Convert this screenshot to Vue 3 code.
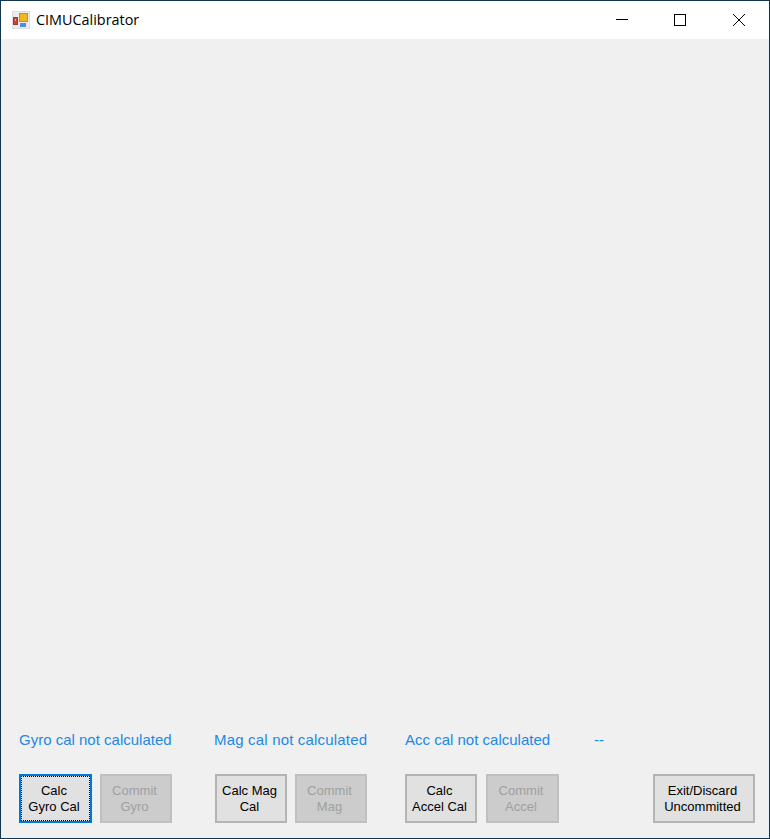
<script setup>
const labels = [
  { text: 'Gyro cal not calculated', cls: 'l1' },
  { text: 'Mag cal not calculated', cls: 'l2' },
  { text: 'Acc cal not calculated', cls: 'l3' },
  { text: '--', cls: 'l4' }
]
const groups = [
  { cls: 'g1', main: ['Calc', 'Gyro Cal'], commit: ['Commit', 'Gyro'], focus: true },
  { cls: 'g2', main: ['Calc Mag', 'Cal'], commit: ['Commit', 'Mag'] },
  { cls: 'g3', main: ['Calc', 'Accel Cal'], commit: ['Commit', 'Accel'] }
]
</script>

<template>
  <div class="window">
    <header class="titlebar">
      <div class="app">
        <svg class="appicon" width="18" height="18" viewBox="0 0 18 18">
          <rect x="0" y="0" width="18" height="18" fill="#dcdcdc" />
          <rect x="1" y="1" width="16" height="16" fill="#ececec" />
          <rect x="7.5" y="2.5" width="8" height="8" fill="#f0b820" stroke="#c0922a" />
          <rect x="1.5" y="6.5" width="4" height="7" fill="#c8443c" stroke="#963c36" />
          <rect x="3" y="8" width="1" height="2" fill="#eaa8a0" />
          <rect x="8" y="12" width="6" height="4" fill="#4a8ee8" />
        </svg>
        <span class="title">CIMUCalibrator</span>
      </div>
      <div class="controls">
        <div class="ctl">
          <svg width="12" height="12" viewBox="0 0 12 12"><path d="M0 5.5H12" stroke="#000" fill="none" /></svg>
        </div>
        <div class="ctl">
          <svg width="12" height="12" viewBox="0 0 12 12"><rect x="0.5" y="0.5" width="11" height="11" stroke="#000" fill="none" /></svg>
        </div>
        <div class="ctl">
          <svg width="12" height="12" viewBox="0 0 12 12"><path d="M0 0L12 12M12 0L0 12" stroke="#000" stroke-width="1" fill="none" /></svg>
        </div>
      </div>
    </header>
    <main class="client">
      <div class="labels">
        <span v-for="l in labels" :key="l.text" class="status" :class="l.cls">{{ l.text }}</span>
      </div>
      <div class="buttons">
        <div v-for="g in groups" :key="g.cls" class="group" :class="g.cls">
          <button class="btn" :class="{ focused: g.focus }">
            <span v-if="g.focus" class="dots"></span>
            {{ g.main[0] }}<br />{{ g.main[1] }}
          </button>
          <button class="btn disabled" disabled>{{ g.commit[0] }}<br />{{ g.commit[1] }}</button>
        </div>
        <button class="btn exit">Exit/Discard<br />Uncommitted</button>
      </div>
    </main>
  </div>
</template>

<style>
html, body { margin: 0; padding: 0; }
</style>

<style scoped>
.window {
  width: 770px;
  height: 839px;
  box-sizing: border-box;
  border: 1px solid #12344f;
  display: flex;
  flex-direction: column;
  background: #f0f0f0;
  overflow: hidden;
  font-family: "Liberation Sans", Arial, sans-serif;
}
.titlebar {
  height: 38px;
  flex: none;
  background: #fff;
  display: flex;
  justify-content: space-between;
  align-items: center;
}
.app { display: flex; align-items: center; padding-left: 11px; }
.appicon { display: block; margin-top: -1px; }
.title {
  margin-left: 6px;
  margin-top: -2px;
  font-family: "Open Sans", "Noto Sans", sans-serif;
  font-size: 14.4px;
  color: #000;
}
.controls { display: flex; margin-right: 1px; }
.ctl {
  width: 58px;
  height: 38px;
  display: flex;
  align-items: center;
  justify-content: center;
}
.ctl:last-child { margin-left: 1px; }
.client {
  flex: 1;
  display: flex;
  flex-direction: column;
  justify-content: flex-end;
  padding: 0 14px 15px 18px;
}
.labels {
  display: flex;
  height: 16px;
  margin-bottom: 26px;
  font-size: 15px;
  line-height: 16px;
  color: #1e88e5;
}
.status { white-space: nowrap; }
.l1 { width: 195px; }
.l2 { width: 191px; letter-spacing: 0.18px; }
.l3 { width: 189px; }
.buttons { display: flex; }
.group { display: flex; gap: 8px; }
.g1 { width: 196px; }
.g2 { width: 190px; }
.g3 { width: 248px; gap: 9px; }
.btn {
  position: relative;
  width: 72px;
  height: 49px;
  padding: 0 3px 0 0;
  box-sizing: border-box;
  border: 2px solid #b4b4b4;
  background: #e1e1e1;
  color: #000;
  font-family: inherit;
  font-size: 13px;
  line-height: 16px;
  text-align: center;
}
.disabled { background: #cccccc; border-color: #c0c0c0; color: #a0a0a0; }
.focused { width: 73px; border-color: #0078d7; }
.g3 .disabled { width: 73px; }
.dots {
  position: absolute;
  inset: 0;
  border: 1px dotted #000;
}
.exit { width: 102px; }
</style>
